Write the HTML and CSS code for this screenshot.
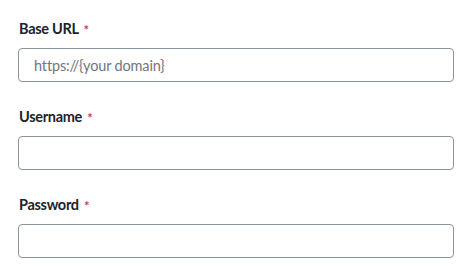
FILE: index.html
```html
<!DOCTYPE html>
<html>
<head>
<meta charset="utf-8">
<link rel="stylesheet" href="styles.css">
</head>
<body>
<form class="form">
  <div class="field">
    <label class="label">Base URL <span class="req">*</span></label>
    <input class="input" type="text" placeholder="https://{your domain}">
  </div>
  <div class="field">
    <label class="label">Username <span class="req">*</span></label>
    <input class="input" type="text">
  </div>
  <div class="field">
    <label class="label">Password <span class="req">*</span></label>
    <input class="input" type="password">
  </div>
</form>
</body>
</html>
```
FILE: styles.css
```css
html, body {
  margin: 0;
  padding: 0;
  background: #ffffff;
}
.form {
  display: flex;
  flex-direction: column;
  gap: 25px;
  padding: 19px 20px 0 18px;
  font-family: Lato, "Open Sans", sans-serif;
}
.field {
  display: flex;
  flex-direction: column;
  gap: 9px;
}
.label {
  font-size: 14.5px;
  line-height: 20px;
  font-weight: 700;
  letter-spacing: -0.3px;
  color: #1b222c;
  padding-left: 1px;
}
.req {
  color: #d6336c;
  font-size: 13px;
  margin-left: 2px;
  position: relative;
  top: 1px;
}
.input {
  box-sizing: border-box;
  width: 436px;
  height: 34px;
  margin: 0;
  padding: 0 15px;
  border: 1px solid #8c939c;
  border-radius: 4px;
  background: #ffffff;
  font-family: Lato, "Open Sans", sans-serif;
  font-size: 14.5px;
  letter-spacing: -0.15px;
  color: #1d2530;
  outline: none;
}
.input::placeholder {
  color: #6f767f;
}
```
